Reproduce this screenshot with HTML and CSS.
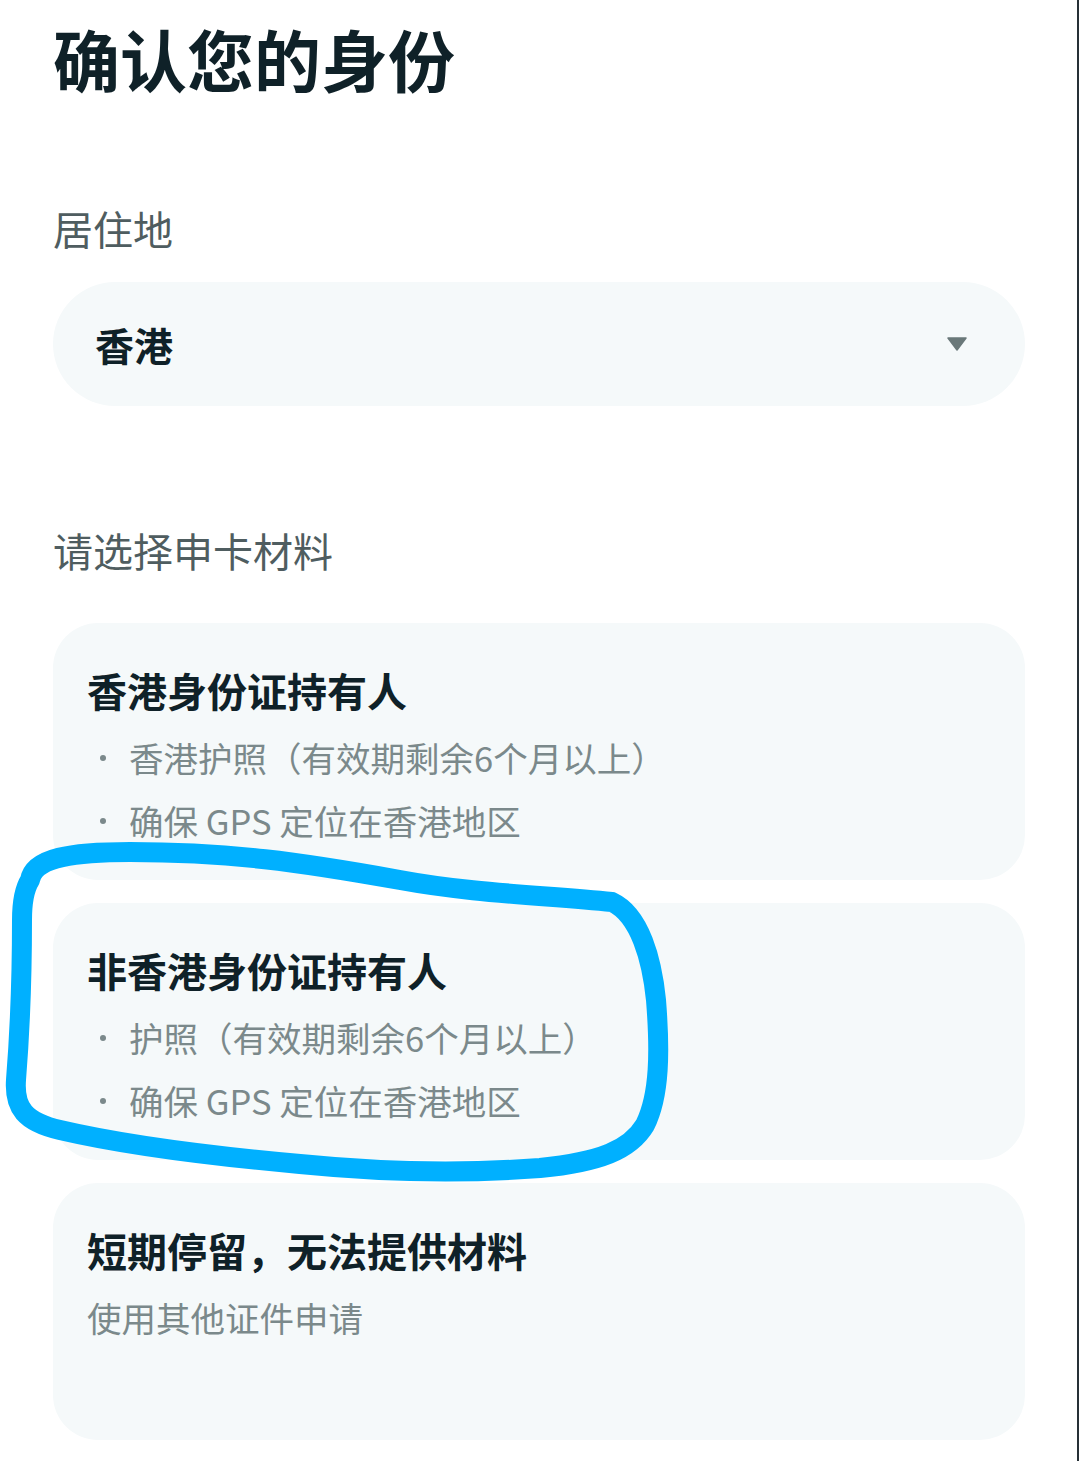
FILE: index.html
```html
<!DOCTYPE html>
<html lang="zh-CN">
<head>
    <meta charset="UTF-8">
    <meta name="viewport" content="width=device-width, initial-scale=1.0">
    <title>确认您的身份</title>
    <link rel="stylesheet" href="styles.css">
</head>
<body>
    <div class="page">
        <h1 class="page-title">确认您的身份</h1>

        <p class="field-label">居住地</p>
        <div class="select-box">
            <span class="select-value">香港</span>
            <svg class="select-arrow" width="20" height="14" viewBox="0 0 20 14">
                <path d="M1 1 H19 L10 13 Z" fill="#6a7879" stroke="#6a7879" stroke-width="1.5" stroke-linejoin="round"/>
            </svg>
        </div>

        <p class="field-label section-label">请选择申卡材料</p>

        <div class="option-list">
            <div class="option-card">
                <h2 class="option-title">香港身份证持有人</h2>
                <ul class="option-points">
                    <li>香港护照（有效期剩余6个月以上）</li>
                    <li>确保 GPS 定位在香港地区</li>
                </ul>
            </div>
            <div class="option-card">
                <h2 class="option-title">非香港身份证持有人</h2>
                <ul class="option-points">
                    <li>护照（有效期剩余6个月以上）</li>
                    <li>确保 GPS 定位在香港地区</li>
                </ul>
            </div>
            <div class="option-card">
                <h2 class="option-title">短期停留，无法提供材料</h2>
                <p class="option-note">使用其他证件申请</p>
            </div>
        </div>

        <!-- hand drawn mark around the second option -->
        <svg class="scribble" width="1079" height="1461" viewBox="0 0 1079 1461">
            <path d="M30 880 C34 858 70 852 130 852 C230 852 300 862 400 880 C470 893 540 895 612 902 C640 915 652 960 656 1000 C660 1050 660 1095 645 1125 C630 1150 600 1162 540 1168 C460 1174 380 1172 300 1164 C200 1155 120 1144 60 1130 C25 1122 14 1108 16 1080 C20 1030 22 960 22 920 C22 900 25 888 30 880 Z"
                  fill="none" stroke="#00b0ff" stroke-width="20" stroke-linecap="round" stroke-linejoin="round"/>
        </svg>
    </div>
</body>
</html>
```

FILE: styles.css
```css
body {
    margin: 0;
    padding: 0;
    background: #ffffff;
    font-family: "Noto Sans CJK SC", "Noto Sans", sans-serif;
}
.page {
    position: relative;
    box-sizing: border-box;
    width: 1079px;
    min-height: 1461px;
    padding: 18px 52px 0 53px;
    border-right: 2px solid #263036;
    overflow: hidden;
}
.page-title {
    margin: 0;
    font-size: 67px;
    line-height: 80px;
    font-weight: 700;
    color: #0f2128;
}
.field-label {
    margin: 102px 0 0;
    font-size: 40px;
    line-height: 56px;
    color: #4f5d60;
}
.section-label {
    margin-top: 116px;
}
.select-box {
    margin-top: 26px;
    height: 124px;
    border-radius: 62px;
    background: #f5f9fa;
    display: flex;
    align-items: center;
    justify-content: space-between;
    padding: 0 58px 0 42px;
}
.select-value {
    font-size: 39px;
    font-weight: 700;
    color: #0f2128;
}
.select-arrow {
    display: block;
}
.option-list {
    margin-top: 45px;
    display: flex;
    flex-direction: column;
    gap: 23px;
}
.option-card {
    box-sizing: border-box;
    height: 257px;
    border-radius: 45px;
    background: #f5f9fa;
    padding: 42px 34px 0;
}
.option-title {
    margin: 0;
    font-size: 40px;
    line-height: 50px;
    font-weight: 700;
    color: #0f2128;
}
.option-points {
    list-style: none;
    margin: 11px 0 0;
    padding: 0;
}
.option-points li {
    position: relative;
    padding-left: 42px;
    font-size: 34.5px;
    line-height: 63px;
    color: #7b898b;
}
.option-points li::before {
    content: "";
    position: absolute;
    left: 13px;
    top: 29px;
    width: 6px;
    height: 6px;
    border-radius: 50%;
    background: #7b898b;
}
.option-note {
    margin: 11px 0 0;
    font-size: 34.5px;
    line-height: 63px;
    color: #7b898b;
}
.scribble {
    position: absolute;
    top: 0;
    left: 0;
    pointer-events: none;
}
```
